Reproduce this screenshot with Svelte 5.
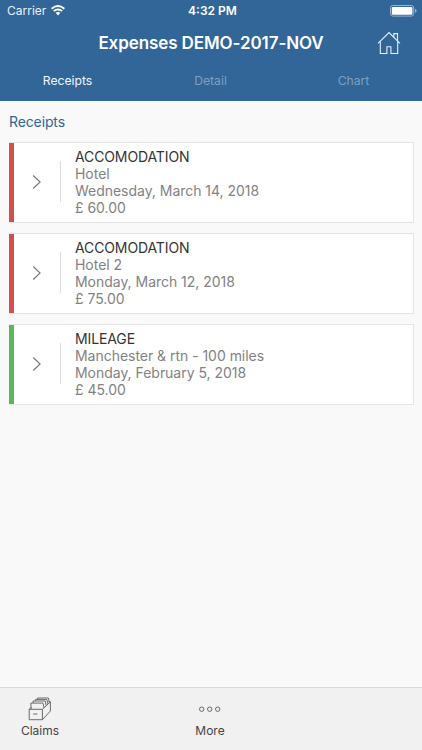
<script>
  const tabs = ['Receipts', 'Detail', 'Chart'];

  const receipts = [
    { type: 'ACCOMODATION', description: 'Hotel', date: 'Wednesday, March 14, 2018', amount: '£ 60.00', status: 'red' },
    { type: 'ACCOMODATION', description: 'Hotel 2', date: 'Monday, March 12, 2018', amount: '£ 75.00', status: 'red' },
    { type: 'MILEAGE', description: 'Manchester & rtn - 100 miles', date: 'Monday, February 5, 2018', amount: '£ 45.00', status: 'green' }
  ];

  let activeTab = $state('Receipts');
</script>

<div class="app">
  <header>
    <div class="status-bar">
      <div class="carrier">
        <span>Carrier</span>
        <svg class="wifi" width="14" height="11" viewBox="0 0 14 11">
          <path d="M0.6 3.7 Q7 -1.7 13.4 3.7" />
          <path d="M2.8 6.1 Q7 2.7 11.2 6.1" />
          <path class="dot" d="M4.6 7.8 Q7 6 9.4 7.8 L7 10.4 Z" />
        </svg>
      </div>
      <span class="time">4:32 PM</span>
      <div class="battery">
        <svg width="27" height="12" viewBox="0 0 27 12">
          <rect class="shell" x="0.5" y="0.5" width="23.2" height="10.6" rx="2.4" />
          <rect class="level" x="1.8" y="1.9" width="20.6" height="7.8" rx="1.2" />
          <path class="cap" d="M25 3.8 Q26.6 4.3 26.6 5.8 Q26.6 7.3 25 7.8 Z" />
        </svg>
      </div>
    </div>

    <div class="title-bar">
      <h1>Expenses DEMO-2017-NOV</h1>
      <button class="home" aria-label="Home">
        <svg width="24" height="24" viewBox="0 0 24 24">
          <path d="M1 12.4 L12 1.6 L23 12.4" />
          <path d="M3.3 10.3 V22.5 H9.9 V15.8 H13.9 V22.5 H20.7 V10.3" />
          <path d="M16.8 6.2 V2.6 H20.5 V9.8" />
        </svg>
      </button>
    </div>

    <nav class="tabs">
      {#each tabs as tab}
        <button class:active={activeTab === tab} onclick={() => (activeTab = tab)}>{tab}</button>
      {/each}
    </nav>
  </header>

  <main>
    <h2>Receipts</h2>
    {#each receipts as receipt}
      <div class="card">
        <div class="stripe {receipt.status}"></div>
        <div class="arrow">
          <svg width="10" height="16" viewBox="0 0 10 16">
            <path d="M1.2 1.5 L8.1 8 L1.2 14.5" />
          </svg>
        </div>
        <div class="info">
          <p class="type">{receipt.type}</p>
          <p>{receipt.description}</p>
          <p>{receipt.date}</p>
          <p>{receipt.amount}</p>
        </div>
      </div>
    {/each}
  </main>

  <footer>
    <button class="claims">
      <svg width="24" height="24" viewBox="0 0 24 24">
        <path d="M1.2 12.3 H14.4 V22.7 H1.2 Z M5.2 17 H9.4" />
        <path d="M14.4 12.3 L22.4 4.8 V14 L14.4 22.7" />
        <path d="M1.2 12.3 L3 10.2 M22.4 4.8 H20.8" />
        <path d="M3.2 12.3 L2.8 6.1 H15 L16 10.8" />
        <path d="M5.3 6 L5 4 H17.2 L18.2 8.6" />
        <path d="M7.6 4 V2.4 H18.8 L20 7" />
        <path d="M9.6 2.4 V1 H20.4 L21.4 5.6" />
      </svg>
      <span>Claims</span>
    </button>
    <button class="more">
      <svg width="24" height="24" viewBox="0 0 24 24">
        <circle cx="3.7" cy="12.2" r="2.2" />
        <circle cx="11.7" cy="12.2" r="2.2" />
        <circle cx="19.7" cy="12.2" r="2.2" />
      </svg>
      <span>More</span>
    </button>
  </footer>
</div>

<style>
  :global(body) {
    margin: 0;
  }

  .app {
    display: flex;
    flex-direction: column;
    height: 100vh;
    overflow: hidden;
    background: #f9f9f9;
    font-family: Inter, "Liberation Sans", sans-serif;
  }

  button {
    padding: 0;
    border: 0;
    background: none;
    font-family: inherit;
    cursor: pointer;
  }

  svg {
    display: block;
    fill: none;
  }

  h1, h2, p {
    margin: 0;
  }

  header {
    box-sizing: border-box;
    height: 101px;
    flex: none;
    background: #326698;
    color: #fff;
  }

  .status-bar {
    display: grid;
    grid-template-columns: 1fr auto 1fr;
    align-items: center;
    height: 21px;
    padding: 0 5px 0 7px;
    font-size: 12px;
  }

  .carrier {
    display: flex;
    align-items: center;
    gap: 5px;
    color: #e9f1f8;
  }

  .wifi path {
    stroke: #fff;
    stroke-width: 1.9;
  }

  .wifi .dot {
    fill: #fff;
    stroke: none;
  }

  .time {
    padding-left: 1px;
    font-weight: 600;
  }

  .battery {
    justify-self: end;
  }

  .shell {
    stroke: #9bb5cd;
  }

  .level {
    fill: #fff;
  }

  .cap {
    fill: #9bb5cd;
  }

  .title-bar {
    display: grid;
    grid-template-columns: 1fr auto 1fr;
    align-items: center;
    height: 43px;
    padding: 0 21px;
  }

  h1 {
    grid-column: 2;
    font-size: 17px;
    font-weight: 600;
    letter-spacing: -0.09px;
    white-space: nowrap;
  }

  .home {
    justify-self: end;
  }

  .home svg {
    stroke: #e8f0f6;
    stroke-width: 1.1;
  }

  .tabs {
    display: grid;
    grid-template-columns: repeat(3, 1fr);
    height: 32px;
    margin: 0 -3px 0 -4px;
  }

  .tabs button {
    color: #7f9fbf;
    font-size: 12.2px;
  }

  .tabs .active {
    color: #f2f7fb;
  }

  main {
    flex: 1;
    padding: 0 8.5px 0 9px;
  }

  h2 {
    height: 41px;
    color: #326698;
    font-size: 14px;
    font-weight: 400;
    letter-spacing: -0.12px;
    line-height: 42px;
  }

  .card {
    display: flex;
    box-sizing: border-box;
    height: 81px;
    margin-bottom: 10px;
    border: 1px solid #e4e4e4;
    border-left: 0;
    background: #fff;
  }

  .stripe {
    width: 5px;
  }

  .red {
    background: #d05050;
  }

  .green {
    background: #5bb55b;
  }

  .arrow {
    display: flex;
    align-items: center;
    box-sizing: border-box;
    width: 47px;
    height: 41px;
    margin-top: 18px;
    padding-left: 18px;
    border-right: 1px solid #dcdcdc;
  }

  .arrow path {
    stroke: #777;
    stroke-width: 1.1;
  }

  .info {
    padding: 5px 0 0 14px;
    color: #828282;
    font-size: 14px;
    letter-spacing: -0.03px;
    line-height: 17px;
    white-space: nowrap;
  }

  .info .type {
    color: #333;
    letter-spacing: -0.12px;
  }

  footer {
    display: flex;
    box-sizing: border-box;
    height: 63px;
    border-top: 1px solid #d9d9d9;
    background: #f1f1f1;
  }

  footer button {
    display: flex;
    flex-direction: column;
    align-items: center;
    padding-top: 9px;
    color: #444;
    font-size: 12px;
    line-height: 20px;
  }

  footer svg {
    stroke: #6a6a6a;
    stroke-width: 1;
  }

  .claims {
    width: 80px;
  }

  .more {
    width: 80px;
    margin-left: 90px;
  }
</style>
